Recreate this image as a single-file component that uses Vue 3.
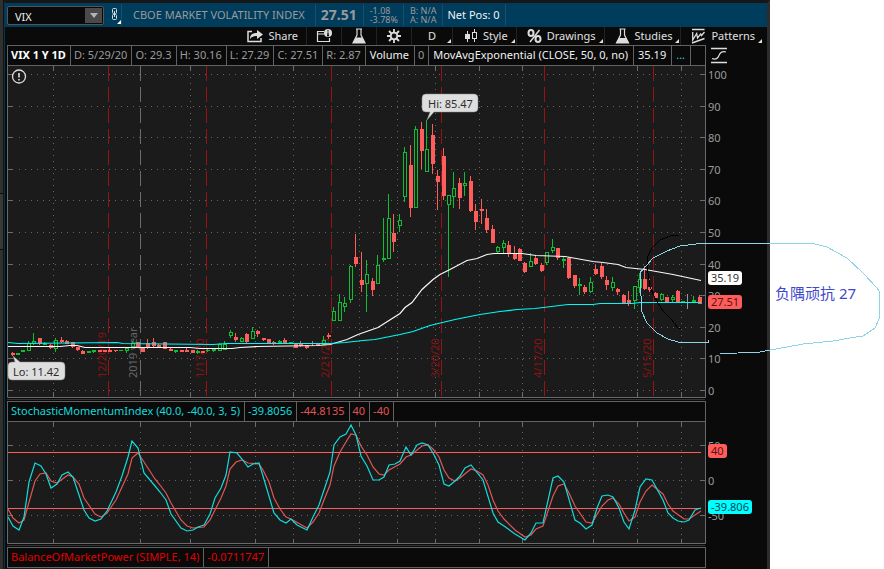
<script setup>
import { ref } from 'vue'

const symbol = ref('VIX')

// Each candle: x centre, wick top, body top, body bottom, wick bottom, kind
// (r = falling, g = rising outline, s = small solid rising, n = unchanged)
const candles = `13 352 353 355 356 r;18 353 353 355 355 s;23 350 350 352 352 s;29 341 343 351 351 g;34 333 341 344 345 g;40 338 338 344 345 r;45 342 343 345 345 s;51 344 345 348 349 r;56 338 340 349 352 g;62 337 340 342 343 r;67 340 341 344 344 r;73 342 342 347 348 r;78 347 347 350 351 r;83 350 351 354 354 r;89 351 351 353 353 s;94 350 350 352 353 s;100 350 350 352 352 r;105 350 350 352 352 r;110 348 350 352 352 r;116 350 350 351 352 r;121 350 350 351 351 s;127 347 348 351 353 g;133 341 343 347 347 g;138 342 342 348 348 r;143 347 347 352 352 r;148 339 343 348 349 r;154 338 342 346 347 r;159 344 345 348 348 r;165 342 342 349 349 r;171 348 349 351 351 r;176 350 350 352 353 s;182 350 350 352 352 r;187 347 350 352 352 r;193 350 350 353 353 r;198 350 351 353 354 s;203 351 351 353 353 r;208 349 350 351 352 s;214 349 349 351 352 g;220 343 344 351 351 g;225 341 344 350 350 g;231 330 332 336 338 g;236 333 337 340 342 r;242 337 338 342 342 g;247 333 334 342 343 r;253 327 331 339 339 g;258 330 331 334 337 r;264 338 338 340 341 r;269 339 339 344 344 r;274 341 342 344 345 r;280 340 341 344 344 s;285 338 340 343 344 r;291 342 342 344 344 s;296 343 344 348 348 r;301 341 343 346 347 r;307 345 345 348 349 r;313 341 343 344 346 r;318 343 344 345 346 r;324 336 340 345 345 g;329 333 335 337 339 r;334 307 311 321 321 g;340 294 302 321 321 g;345 297 303 307 312 g;351 265 266 300 303 g;356 234 257 264 267 r;362 252 280 285 292 r;367 260 274 284 312 g;373 278 281 290 296 r;378 255 265 284 284 g;384 218 258 260 262 s;389 194 218 259 259 g;394 214 233 242 252 r;400 214 220 226 232 g;405 147 152 197 202 g;411 145 165 208 217 r;416 126 129 208 208 g;422 122 129 151 169 r;427 120 149 172 172 g;433 124 135 164 174 r;438 170 176 182 210 r;444 148 156 196 200 r;449 195 195 205 277 g;454 172 188 197 208 g;460 178 183 198 209 r;465 172 183 186 196 g;471 176 181 211 212 r;476 204 211 222 230 r;482 199 209 211 224 r;487 209 218 230 233 r;493 225 229 243 243 r;498 246 247 252 253 g;504 240 243 248 253 g;509 241 245 254 257 r;515 246 253 259 260 r;520 248 249 261 261 r;525 262 263 272 273 r;531 253 261 267 267 g;536 255 258 264 265 r;542 263 265 271 272 r;547 252 252 263 265 g;553 239 247 251 253 g;558 248 248 258 260 r;564 257 259 261 268 s;569 257 258 278 279 r;575 275 275 286 288 r;580 278 284 286 295 s;585 285 287 292 294 r;591 277 282 292 293 g;596 265 269 274 275 r;602 263 266 277 279 r;607 276 280 285 290 r;613 277 282 288 291 g;618 288 289 292 295 r;624 294 295 303 303 r;629 291 300 304 306 r;635 286 286 301 309 g;640 273 279 288 293 g;645 266 279 289 290 r;650 279 287 290 292 r;656 292 293 298 299 r;662 293 294 300 301 g;667 297 297 302 303 r;673 295 297 300 303 g;678 290 291 302 302 r;683 301 301 303 303 s;688 294 302 303 309 n;694 296 300 302 303 s;700 295 297 304 304 r`
  .split(';')
  .map((row) => {
    const [x, hi, top, bottom, lo, kind] = row.split(' ')
    return { x: x - 1, hi: +hi, top: +top, bottom: +bottom, lo: +lo, kind }
  })

const emaShort = '8,346 60,346 70,345 77,345 85,347 105,347 190,347 200,348 232,348 240,347 258,346 318,345 330,344 347,339 358,334 378,327 400,313 405,307 412,302 422,289 433,279 440,274 450,269 467,260 477,258 487,254 494,253 522,253 536,255 565,256 593,261 603,262 618,264 626,267 645,269 673,274 701,280'
const emaLong = '8,342 18,343 117,342 123,343 213,344 227,343 330,343 345,342 363,340 375,339 400,334 413,331 430,325 455,319 480,314 500,311 517,309 535,308 568,304 593,304 600,303 632,303 640,302 701,302'

const smi = '8,517 13,526 19,530 24,517 29,482 35,463 41,466 46,474 51,488 57,484 62,475 68,472 73,477 78,492 84,510 89,518 95,521 101,519 107,511 116,492 122,476 128,457 132,441 138,448 144,473 155,486 160,492 166,500 171,514 181,528 187,531 193,530 198,527 204,525 210,514 215,498 221,488 226,475 230,452 237,453 242,459 248,467 253,464 259,463 263,476 274,513 280,520 286,523 291,519 297,525 307,530 313,517 319,505 324,490 330,472 334,445 340,437 346,434 351,425 356,435 361,456 367,466 373,480 379,480 384,477 389,465 395,464 400,461 406,447 411,455 417,445 422,443 428,445 433,453 439,465 444,484 449,486 455,481 460,476 465,468 471,465 483,480 493,513 498,522 504,526 515,534 525,540 531,533 536,523 543,523 553,478 558,476 564,482 575,520 580,523 586,529 592,525 597,508 602,496 608,495 613,497 619,508 624,522 629,529 635,510 640,487 646,479 652,480 663,500 668,513 673,518 678,521 684,522 689,520 695,510 701,508'
const smiAvg = '8,509 13,518 19,523 24,520 35,481 40,474 46,473 51,481 57,483 68,475 73,477 79,484 84,498 95,514 101,517 107,513 116,500 128,474 132,458 138,453 144,462 155,479 160,485 166,493 171,503 181,520 187,526 193,528 204,527 210,520 221,498 226,486 230,469 236,462 242,460 248,463 259,464 263,470 269,482 274,498 280,509 286,517 291,519 307,528 313,522 319,513 324,500 330,485 334,466 340,452 346,442 351,434 356,435 361,446 367,455 373,467 379,474 384,475 389,470 400,464 406,457 411,455 422,446 428,445 433,449 439,457 444,470 449,478 455,481 460,478 466,473 471,469 477,471 483,475 488,485 493,500 498,511 504,519 515,530 525,537 531,535 536,529 543,526 547,514 553,496 558,486 564,484 569,493 575,506 586,522 592,523 602,506 608,500 613,498 619,504 624,513 629,521 635,517 640,502 646,491 652,485 663,494 668,504 673,511 684,519 689,519 701,511'

const weeks = [53, 190, 255, 293, 359, 397, 435, 479, 522, 593, 637, 681]
const expirations = [
  { x: 108, label: '12/20/19' },
  { x: 206, label: '1/17/20' },
  { x: 331, label: '2/21/20' },
  { x: 441, label: '3/20/20' },
  { x: 544, label: '4/17/20' },
  { x: 653, label: '5/15/20' },
]
const prices = [
  { v: 100, y: 74 }, { v: 90, y: 106 }, { v: 80, y: 137 }, { v: 70, y: 169 },
  { v: 60, y: 200 }, { v: 50, y: 232 }, { v: 40, y: 264 }, { v: 30, y: 295 },
  { v: 20, y: 327 }, { v: 10, y: 358 }, { v: 0, y: 390 },
]
const smiLevels = [{ v: 50, y: 445 }, { v: 0, y: 480 }, { v: -50, y: 515 }]

const quote = ['D: 5/29/20', 'O: 29.3', 'H: 30.16', 'L: 27.29', 'C: 27.51', 'R: 2.87']
</script>

<template>
  <main class="page">
    <section class="platform">
      <div class="rail"></div>
      <div class="workspace">
        <header class="symbol-bar">
          <div class="combo">
            <input v-model="symbol" aria-label="Symbol" spellcheck="false" />
            <button type="button" aria-label="Choose symbol">
              <svg width="8" height="5" viewBox="0 0 8 5"><path d="M0 0h8L4 5z" fill="#b4b4b4" /></svg>
            </button>
          </div>
          <button class="link" type="button" aria-label="Link symbol">
            <svg width="11" height="18" viewBox="0 0 11 18">
              <g fill="none" stroke="#d5dde1">
                <rect x="2.500" y="2.500" width="4" height="5" rx="1" />
                <rect x="2.500" y="8.500" width="4" height="5" rx="1" />
                <path d="M4.500 5v6" />
              </g>
              <path d="M11 14v4H7z" fill="#fff" />
            </svg>
          </button>
          <h1 class="seg title">CBOE MARKET VOLATILITY INDEX</h1>
          <strong class="seg last">27.51</strong>
          <div class="seg pair"><span>-1.08</span><span>-3.78%</span></div>
          <div class="seg pair"><span>B: N/A</span><span>A: N/A</span></div>
          <div class="seg net">Net Pos: 0</div>
        </header>

        <nav class="toolbar">
          <button type="button">
            <svg width="16" height="16" viewBox="0 0 16 16">
              <path d="M5 3.500H1v10h13V10" fill="none" stroke="#ddd" stroke-width="1.500" />
              <path d="M3 11c0-4 2-6 7-6V2l6 4.500-6 4.500V8C7 8 5 8.500 3 11z" fill="#ddd" />
            </svg>
            Share
          </button>
          <button type="button" class="only" aria-label="Calendar">
            <svg width="16" height="16" viewBox="0 0 16 16">
              <path d="M8 3.500H1.500v10h12V10M1.500 6H8" fill="none" stroke="#ddd" stroke-width="1.200" />
              <circle cx="12" cy="5" r="4" fill="#ddd" />
              <path d="M12 2.200v1.400M12 4.500v3M11 7.500h2" stroke="#111" stroke-width="1.400" />
            </svg>
          </button>
          <button type="button" class="only" aria-label="Edit studies">
            <svg width="14" height="16" viewBox="0 0 14 16">
              <path d="M4 1h6M5 1v6l-4 8h12L9 7V1" fill="none" stroke="#ddd" stroke-width="1.200" />
              <path d="M4 9.500h6l3 5.500H1z" fill="#ddd" />
            </svg>
          </button>
          <button type="button" class="only" aria-label="Settings">
            <svg width="14" height="14" viewBox="0 0 14 14">
              <g stroke="#ddd" stroke-width="1.800">
                <path d="M7 0v14M0 7h14M2 2l10 10M12 2L2 12" />
              </g>
              <circle cx="7" cy="7" r="4.200" fill="#ddd" />
              <circle cx="7" cy="7" r="2.400" fill="#111" />
            </svg>
          </button>
          <button type="button" class="period more">D</button>
          <button type="button" class="more">
            <svg width="15" height="16" viewBox="0 0 15 16">
              <path d="M4.500 3v11M11.500 1v3M11.500 11v3" stroke="#ddd" />
              <rect x="2" y="6" width="5" height="5" fill="#ddd" />
              <rect x="9.500" y="4.500" width="4" height="6" fill="none" stroke="#ddd" />
            </svg>
            Style
          </button>
          <button type="button" class="more">
            <svg width="15" height="16" viewBox="0 0 15 16">
              <g fill="none" stroke="#ddd" stroke-width="2">
                <ellipse cx="4" cy="5" rx="2.500" ry="3" />
                <ellipse cx="11" cy="11" rx="2.500" ry="3" />
                <path d="M12.500 2L3 14" stroke-width="1.500" />
              </g>
            </svg>
            Drawings
          </button>
          <button type="button" class="more">
            <svg width="15" height="16" viewBox="0 0 15 16">
              <path d="M4.500 1h6M5.500 1v6l-4 8h12l-4-8V1" fill="none" stroke="#ddd" stroke-width="1.200" />
              <path d="M4 10h7l3 5H1z" fill="#ddd" />
            </svg>
            Studies
          </button>
          <button type="button" class="more">
            <svg width="15" height="16" viewBox="0 0 15 16">
              <path d="M1 1.500h12.500M1 15l12.500-4.500" stroke="#ddd" stroke-width="1.500" />
              <path d="M1.700 4v8l4-6.500.8 4.500 3.200-4 .8 1.500 3-3.500" fill="none" stroke="#ddd" stroke-width="1.300" />
            </svg>
            Patterns
          </button>
        </nav>

        <div class="row">
          <div class="legend">
            <span class="cell bold">VIX 1 Y 1D</span>
            <span v-for="q in quote" :key="q" class="cell">{{ q }}</span>
            <span class="cell bright">Volume</span>
            <span class="cell">0</span>
            <span class="cell bright">MovAvgExponential (CLOSE, 50, 0, no)</span>
            <span class="cell bright">35.19</span>
            <span class="cell cyan">...</span>
          </div>
          <div class="gutter">
            <svg width="17" height="17" viewBox="0 0 17 17">
              <path d="M0 1.500h16M0 15.500h16" stroke="#ddd" stroke-width="1.500" />
              <path d="M1 11.500c4 1.500 6-.5 7-3s3-4.500 7-3.500" fill="none" stroke="#ddd" stroke-width="1.200" />
            </svg>
          </div>
        </div>

        <svg class="chart" viewBox="7 66 760 332" role="img" aria-label="VIX daily price chart">
          <rect x="7" y="66" width="699" height="332" fill="#1b1b1b" />
          <g class="dots">
            <path v-for="p in prices" :key="p.v" :d="`M19 ${p.y + 0.5}H696`" />
            <path v-for="x in weeks" :key="x" :d="`M${x + 0.5} 77V390`" />
          </g>
          <g class="ticks">
            <path v-for="p in prices" :key="p.v" :d="`M8 ${p.y + 0.5}h5M700 ${p.y + 0.5}h5`" />
            <path v-for="x in weeks" :key="x" :d="`M${x + 0.5} 66v5M${x + 0.5} 392v5`" />
            <path d="M140.500 66V397" stroke-dasharray="15 6" />
          </g>
          <path v-for="e in expirations" :key="e.x" class="expiry" :d="`M${e.x + 0.5} 66V397`" />
          <text v-for="e in expirations" :key="e.label" class="date" :transform="`translate(${e.x - 2} 378) rotate(-90)`">{{ e.label }}</text>
          <text class="date year" transform="translate(137 378) rotate(-90)">2019 year</text>

          <g shape-rendering="crispEdges">
            <g v-for="c in candles" :key="c.x" :class="['candle', c.kind]">
              <path :d="`M${c.x + 0.5} ${c.hi}V${c.top}M${c.x + 0.5} ${c.bottom}V${c.lo}`" />
              <rect v-if="c.kind === 'g'" :x="c.x - 0.5" :y="c.top + 0.5" width="3" :height="Math.max(c.bottom - c.top - 1, 1)" />
              <rect v-else class="solid" :x="c.x - 1" :y="c.top" width="4" :height="c.bottom - c.top" />
            </g>
          </g>
          <g transform="translate(0 0.5)">
            <polyline class="line white" :points="emaShort" />
            <polyline class="line aqua" :points="emaLong" />
          </g>

          <path class="frame" d="M7.500 66V397.500H705.500V66" />

          <g fill="none" stroke="#ddd">
            <circle cx="19" cy="76.500" r="6.500" stroke-width="1.300" />
            <path d="M19 73v4.500M19 79v1.500" stroke-width="1.600" />
          </g>

          <path class="callout" d="M427 120l3-8h-4a4 4 0 0 1-4-4v-10a4 4 0 0 1 4-4h48a4 4 0 0 1 4 4v10a4 4 0 0 1-4 4h-40z" />
          <text class="note" x="428" y="108">Hi: 85.47</text>
          <path class="callout" d="M13 356l2 6h-3a4 4 0 0 0-4 4v10a4 4 0 0 0 4 4h49a4 4 0 0 0 4-4v-10a4 4 0 0 0-4-4h-41z" />
          <text class="note" x="13" y="376">Lo: 11.42</text>

          <text v-for="p in prices" :key="p.v" class="axis" x="708" :y="p.y + 5">{{ p.v }}</text>
          <rect x="708" y="271" width="34" height="14" rx="3" fill="#fff" />
          <text class="tag" x="711" y="282">35.19</text>
          <rect x="708" y="295" width="34" height="14" rx="3" fill="#ff5c5c" />
          <text class="tag red" x="711" y="306">27.51</text>
        </svg>

        <div class="split"></div>
        <div class="row">
          <div class="legend">
            <span class="cell aqua">StochasticMomentumIndex (40.0, -40.0, 3, 5)</span>
            <span class="cell aqua">-39.8056</span>
            <span class="cell coral">-44.8135</span>
            <span class="cell coral">40</span>
            <span class="cell coral">-40</span>
          </div>
          <div class="gutter"></div>
        </div>

        <svg class="chart" viewBox="7 422 760 122" role="img" aria-label="Stochastic momentum index chart">
          <rect x="7" y="422" width="699" height="122" fill="#1b1b1b" />
          <g class="dots">
            <path v-for="l in smiLevels" :key="l.v" :d="`M19 ${l.y + 0.5}H696`" />
            <path v-for="x in [...weeks, 140]" :key="x" :d="`M${x + 0.5} 432V536`" />
          </g>
          <g class="ticks">
            <path v-for="l in smiLevels" :key="l.v" :d="`M8 ${l.y + 0.5}h5M700 ${l.y + 0.5}h5`" />
            <path v-for="x in [...weeks, 140]" :key="x" :d="`M${x + 0.5} 422v5M${x + 0.5} 539v4`" />
          </g>
          <path d="M8 452.500H701M8 508.500H701" stroke="#ff5c5c" />
          <polyline class="line coral" :points="smiAvg" />
          <polyline class="line teal" :points="smi" />
          <path class="frame" d="M7.500 422V543.500H705.500V422" />
          <text v-for="l in smiLevels" :key="l.v" class="axis" x="708" :y="l.y + 5">{{ l.v }}</text>
          <rect x="708" y="444" width="19" height="14" rx="3" fill="#ff5c5c" />
          <text class="tag red" x="711" y="455">40</text>
          <rect x="708" y="500" width="44" height="14" rx="3" fill="#00ffff" />
          <text class="tag green" x="711" y="511">-39.806</text>
        </svg>

        <div class="split"></div>
        <div class="row">
          <div class="legend">
            <span class="cell red">BalanceOfMarketPower (SIMPLE, 14)</span>
            <span class="cell red">-0.0711747</span>
          </div>
          <div class="gutter"></div>
        </div>
        <div class="row rest"><div class="plot"></div><div></div></div>
      </div>
    </section>

    <aside class="remark"></aside>

    <svg class="sketch" viewBox="0 0 884 569" aria-label="Handwritten note">
      <path d="M679 235L670 236 660 240 652 248 647 258 648 273 650 287 655 298 663 311 672 320 678 328H681" stroke="#000" />
      <path d="M708.500 340V342.500H680L668 339 657 333 647 323 642 312 640.500 287V272L647 265 653 258 667 251 680 246 700 243.500H813L827 247 847 258 863 273 877 288 879.500 292V318L875 328 863 336 850 338 833 341 803 344 787 347 770 350 760 352 738 353 720 353.500" stroke="#8fd4e6" />
      <text x="775" y="299">负隅顽抗 27</text>
    </svg>
  </main>
</template>

<style>
body {
  margin: 0;
  background: #fff;
}
</style>

<style scoped>
.page {
  position: relative;
  display: flex;
  min-height: 100vh;
  font: 11px/16px "Noto Sans", "Noto Sans CJK SC", sans-serif;
  color: #9a9a9a;
}
.platform {
  flex: 770 1 0;
  min-width: 0;
  display: flex;
  background: #0a0a0a;
}
.remark { flex: 114 1 0; }
.rail {
  width: 4px;
  box-sizing: border-box;
  background: linear-gradient(#303030 193px, #0a0a0a 193px 194px, #383838 194px 249px, #0a0a0a 249px 250px, #303030 250px);
  border-right: 1px solid #111;
}
.workspace {
  flex: 1;
  min-width: 0;
  display: flex;
  flex-direction: column;
  border-left: 1px solid #04374f;
  border-right: 3px solid #2c2c2c;
  border-top: 3px solid #161616;
  padding-left: 2px;
}
.symbol-bar {
  display: flex;
  align-items: stretch;
  height: 24px;
  margin-left: -2px;
  padding-left: 2px;
  background: #003c5c;
}
.combo {
  display: flex;
  width: 97px;
  height: 19px;
  margin: 3px 5px 2px 0;
  box-sizing: border-box;
  border: 1px solid #555;
  border-radius: 2px;
  background: #0a0a0a;
}
.combo input {
  flex: 1;
  min-width: 0;
  padding: 2px 0 0 7px;
  border: 0;
  background: none;
  font: inherit;
  color: #eee;
  outline: none;
}
button {
  border: 0;
  padding: 0;
  background: none;
  font: inherit;
  color: inherit;
}
.combo button {
  display: grid;
  place-items: center;
  width: 17px;
  margin: 1px;
  background: #4a4a4a;
}
.link {
  display: grid;
  place-items: center;
  width: 12px;
}
.seg {
  display: flex;
  align-items: center;
  margin: 1px 0;
  padding: 0 5px;
  border-left: 1px solid #1b4c68;
}
.title {
  padding: 0 10px 0 11px;
  font-size: 11px;
  font-weight: 400;
}
.last { font-size: 14px; padding-right: 6px; }
.pair {
  flex-direction: column;
  align-items: flex-start;
  justify-content: center;
  padding: 0 5px 0 6px;
  font-size: 9px;
  line-height: 9px;
}
.net {
  color: #f2f2f2;
  border-right: 1px solid #1b4c68;
}
.toolbar {
  display: flex;
  justify-content: flex-end;
  height: 18px;
  padding-right: 4px;
  color: #e0e0e0;
}
.toolbar button {
  position: relative;
  display: flex;
  align-items: center;
  gap: 5px;
  padding: 0 8px 0 10px;
  white-space: nowrap;
}
.toolbar button + button { border-left: 1px solid #222; }
.toolbar .only {
  width: 35px;
  padding: 0;
  justify-content: center;
}
.toolbar .period {
  width: 41px;
  padding: 0;
  justify-content: center;
}
.more::after {
  content: "";
  position: absolute;
  right: 1px;
  bottom: 2px;
  border: 2px solid;
  border-color: transparent #e0e0e0 #e0e0e0 transparent;
}
.row {
  display: grid;
  grid-template-columns: minmax(0, 699fr) minmax(0, 61fr);
}
.legend {
  height: 21px;
  box-sizing: border-box;
  display: flex;
  border: 1px solid #626262;
  background: #0a0a0a;
  overflow: hidden;
}
.gutter { padding: 2px 0 0 5px; }
.gutter svg { display: block; }
.cell {
  flex: none;
  padding: 0 4px 0 3px;
  border-right: 1px solid #626262;
  line-height: 17px;
  white-space: nowrap;
}
.bold { font-weight: 700; color: #fff; }
.cell.bright { color: #f0f0f0; padding: 0 5px 0 4px; }
.cell.cyan { color: #12dada; padding: 0 5px 0 4px; }
.cell.aqua { color: #12dada; }
.cell.coral { color: #e05454; }
.cell.red { color: #e00000; }
.split {
  height: 3px;
  box-sizing: border-box;
  border-top: 1px solid #0a0a0a;
  border-bottom: 1px solid #0a0a0a;
  background: #333;
  width: 91.9%;
}
.chart {
  display: block;
  width: 100%;
  height: auto;
}
.rest { flex: 1; }
.plot { background: #1b1b1b; }

.dots path { stroke: #666; stroke-dasharray: 1 5; }
.ticks path { stroke: #6c6c6c; }
.expiry { stroke: #981414; stroke-dasharray: 15 6; }
.date { font-size: 11px; fill: #861414; }
.date.year { fill: #666; }
.frame { fill: none; stroke: #6a6a6a; }
.candle path { stroke: #0fbf33; }
.candle rect { fill: #1b1b1b; stroke: #0fbf33; }
.candle .solid { stroke: none; fill: #0fbf33; }
.candle.r path { stroke: #ff5c5c; }
.candle.r .solid { fill: #ff5c5c; }
.candle.n path { stroke: #999; }
.candle.n .solid { fill: #999; }
.line { fill: none; stroke-width: 1.2px; }
.line.white { stroke: #f8f8f8; }
.line.aqua { stroke: #00f8f8; }
.line.teal { stroke: #12dcdc; }
.line.coral { stroke: #e25555; }
.callout { fill: #dedede; stroke: #8a8a8a; stroke-width: 0.5px; }
.note { fill: #2c2c2c; }
.axis { fill: #9a9a9a; }
.tag { fill: #333; }
.tag.red { fill: #5c1010; }
.tag.green { fill: #045; }
.sketch {
  position: absolute;
  top: 0;
  left: 0;
  width: 100%;
  height: auto;
  pointer-events: none;
}
.sketch path { fill: none; shape-rendering: crispEdges; }
.sketch text { font-size: 15px; fill: #3f48cc; }
</style>
